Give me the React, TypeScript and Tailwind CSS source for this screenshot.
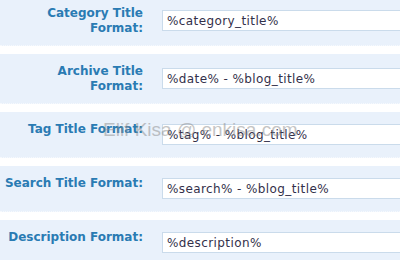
import React from "react";

const rows: { label: string[]; value: string }[] = [
  { label: ["Category Title", "Format:"], value: "%category_title%" },
  { label: ["Archive Title", "Format:"], value: "%date% - %blog_title%" },
  { label: ["Tag Title Format:"], value: "%tag% - %blog_title%" },
  { label: ["Search Title Format:"], value: "%search% - %blog_title%" },
  { label: ["Description Format:"], value: "%description%" },
];

export default function App() {
  return (
    <div className="relative w-[400px] h-[260px] overflow-hidden bg-white">
      <div className="-mt-[4px] flex flex-col gap-[8px]">
        {rows.map((r, i) => (
          <div
            key={i}
            className="flex bg-[#e9f1fb] border-b border-dotted border-[#f6f9fd]"
          >
            <div
              className="w-[143px] shrink-0 pt-[10px] pb-[9px] text-right text-[12px] leading-[15px] font-bold text-[#2a7bb3]"
              style={{ fontFamily: '"DejaVu Sans", Verdana, sans-serif' }}
            >
              {r.label.map((l, j) => (
                <div key={j}>{l}</div>
              ))}
            </div>
            <div className="ml-[19px] flex items-center py-[12px]">
              <div
                className="w-[260px] h-[21px] bg-white border border-[#cadbeb] pl-[4px] flex items-center text-[12px] tracking-[0.4px] text-[#33304a]"
                style={{ fontFamily: '"DejaVu Sans", Verdana, sans-serif' }}
              >
                {r.value}
              </div>
            </div>
          </div>
        ))}
      </div>
      <div
        className="absolute left-[103px] top-[119px] text-[19px] leading-[22px] text-[#8c8c8c] opacity-50 whitespace-nowrap"
        style={{ fontFamily: '"Liberation Sans", Arial, sans-serif' }}
      >
        Elif Kisa @ enkisa.com
      </div>
    </div>
  );
}
